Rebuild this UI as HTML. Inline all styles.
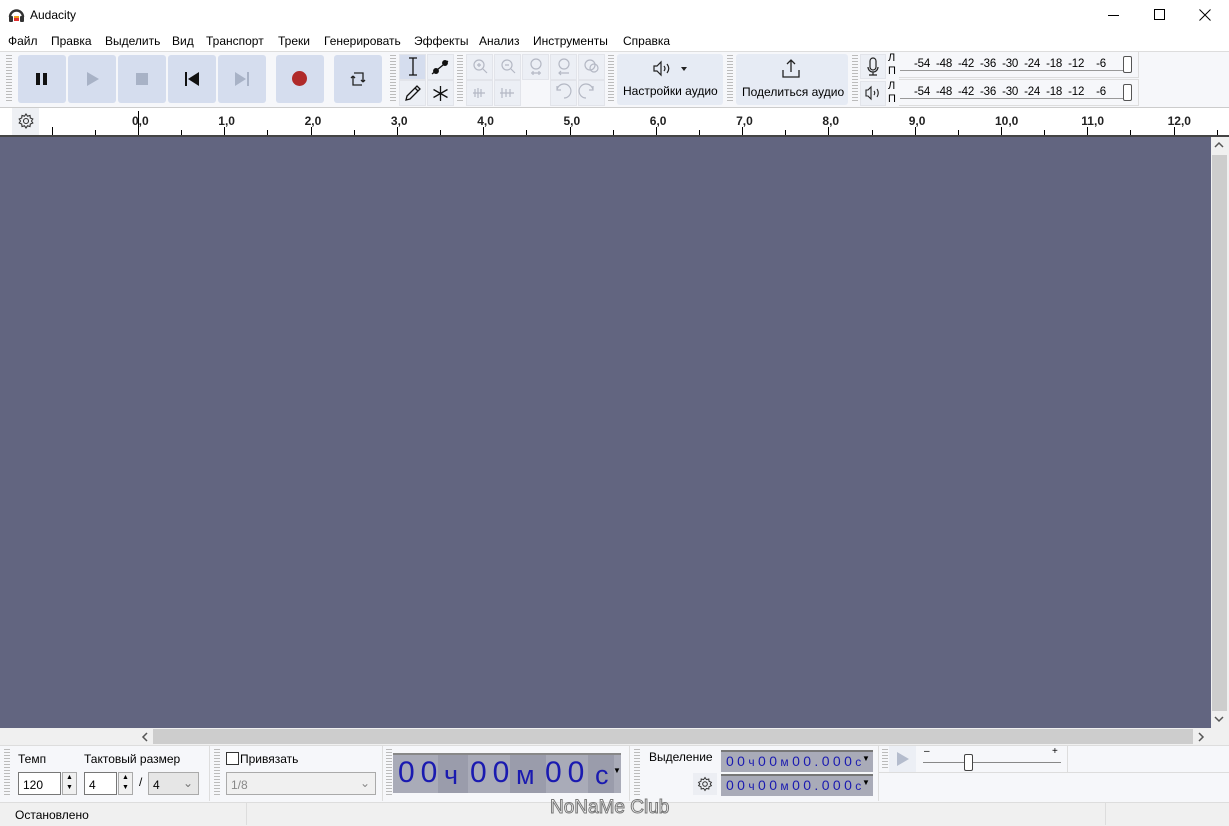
<!DOCTYPE html>
<html><head><meta charset="utf-8"><style>
*{box-sizing:border-box;margin:0;padding:0}
body{width:1229px;height:826px;position:relative;overflow:hidden;background:#f0f0f0;font-family:"Liberation Sans","DejaVu Sans",sans-serif;font-size:12px;color:#000}
.a{position:absolute}
.btn{position:absolute;background:#d5ddee;border-radius:3px}
.grip{position:absolute;width:6px;background:repeating-linear-gradient(to bottom,#bbb 0 1px,transparent 1px 3px);}
.tool{position:absolute;width:27px;height:26px;background:#eceff5;border:1px solid #e2e4ea}
.lcd{position:absolute;background:#a9abb8;font-family:"Liberation Sans",sans-serif;color:#1a1ab0}
.d{position:absolute;color:#1a1ab0;white-space:nowrap}
</style></head><body>
<div class="a" style="left:0;top:0;width:1229px;height:31px;background:#fff"></div>
<svg class="a" style="left:8px;top:7px" width="17" height="16"><path d="M2 10 A6.5 6.5 0 0 1 15 10" stroke="#333" stroke-width="2.4" fill="none"/><rect x="1" y="9" width="4" height="6" rx="1" fill="#333"/><rect x="12" y="9" width="4" height="6" rx="1" fill="#333"/><rect x="6" y="9" width="5" height="5" fill="#f0a020"/><rect x="6" y="11" width="5" height="3" fill="#e03030"/></svg>
<div class="a" style="left:30px;top:8px;font-size:12px">Audacity</div>
<div class="a" style="left:1108px;top:15px;width:11px;height:1px;background:#000"></div>
<div class="a" style="left:1154px;top:9px;width:11px;height:11px;border:1px solid #000"></div>
<svg class="a" style="left:1199px;top:9px" width="12" height="12"><path d="M0.5 0.5L11.5 11.5M11.5 0.5L0.5 11.5" stroke="#000"/></svg>
<div class="a" style="left:0;top:31px;width:1229px;height:20px;background:#fff"></div>
<div class="a" style="left:8px;top:34px;white-space:nowrap">
<span class="a" style="left:0">Файл</span><span class="a" style="left:43px">Правка</span><span class="a" style="left:97px">Выделить</span><span class="a" style="left:164px">Вид</span><span class="a" style="left:198px">Транспорт</span><span class="a" style="left:270px">Треки</span><span class="a" style="left:316px">Генерировать</span><span class="a" style="left:406px">Эффекты</span><span class="a" style="left:471px">Анализ</span><span class="a" style="left:525px">Инструменты</span><span class="a" style="left:615px">Справка</span></div>
<div class="a" style="left:0;top:51px;width:1229px;height:56px;background:#f6f7fa;border-top:1px solid #ddd"></div>
<div class="grip" style="left:6px;top:55px;height:48px"></div>
<div class="btn" style="left:18px;top:55px;width:48px;height:48px"></div>
<div class="btn" style="left:68px;top:55px;width:48px;height:48px"></div>
<div class="btn" style="left:118px;top:55px;width:48px;height:48px"></div>
<div class="btn" style="left:168px;top:55px;width:48px;height:48px"></div>
<div class="btn" style="left:218px;top:55px;width:48px;height:48px"></div>
<div class="btn" style="left:276px;top:55px;width:48px;height:48px"></div>
<div class="btn" style="left:334px;top:55px;width:48px;height:48px"></div>
<div class="a" style="left:36px;top:73px;width:4px;height:12px;background:#111"></div><div class="a" style="left:43px;top:73px;width:4px;height:12px;background:#111"></div>
<svg class="a" style="left:85px;top:71px" width="16" height="16"><path d="M2 1L14 8L2 15Z" fill="#a8b2c6"/></svg>
<div class="a" style="left:136px;top:73px;width:12px;height:12px;background:#a8b2c6"></div>
<svg class="a" style="left:184px;top:72px" width="16" height="14"><rect x="1" y="0" width="2" height="14" fill="#111"/><path d="M15 0L4 7L15 14Z" fill="#111"/></svg>
<svg class="a" style="left:234px;top:72px" width="16" height="14"><rect x="13" y="0" width="2" height="14" fill="#a8b2c6"/><path d="M1 0L12 7L1 14Z" fill="#a8b2c6"/></svg>
<div class="a" style="left:292px;top:71px;width:15px;height:15px;border-radius:50%;background:#b02a2a"></div>
<svg class="a" style="left:349px;top:70px" width="18" height="18" fill="none" stroke="#222" stroke-width="1.3"><path d="M5 3H14V12M14 12L12 10M14 12L16 10"/><path d="M13 15H4V6M4 6L2 8M4 6L6 8"/></svg>
<div class="grip" style="left:390px;top:55px;height:48px"></div>
<div class="tool" style="left:399px;top:54px;background:#d5ddee"></div>
<div class="tool" style="left:427px;top:54px"></div>
<div class="tool" style="left:399px;top:80px"></div>
<div class="tool" style="left:427px;top:80px"></div>
<svg class="a" style="left:405px;top:57px" width="16" height="20" stroke="#111" stroke-width="1.3" fill="none"><path d="M4 1H12M4 18H12M8 1V18"/></svg>
<svg class="a" style="left:430px;top:57px" width="20" height="20" stroke="#111" stroke-width="1.3" fill="#111"><path d="M2 17L18 4" fill="none"/><circle cx="6" cy="14" r="2.3"/><circle cx="15" cy="6" r="2.3"/></svg>
<svg class="a" style="left:404px;top:84px" width="18" height="18" stroke="#111" stroke-width="1.3" fill="none"><path d="M2 16L3 12L13 2L16 5L6 15Z M11 4L14 7"/></svg>
<svg class="a" style="left:432px;top:85px" width="17" height="17" stroke="#111" stroke-width="1.3"><path d="M8.5 1V16M1.5 4.5L15.5 12.5M15.5 4.5L1.5 12.5"/></svg>
<div class="grip" style="left:457px;top:55px;height:48px"></div>
<div class="tool" style="left:466px;top:54px"></div><div class="tool" style="left:494px;top:54px"></div><div class="tool" style="left:522px;top:54px"></div><div class="tool" style="left:550px;top:54px"></div><div class="tool" style="left:578px;top:54px"></div>
<div class="tool" style="left:466px;top:80px"></div><div class="tool" style="left:494px;top:80px"></div><div class="tool" style="left:550px;top:80px"></div><div class="tool" style="left:578px;top:80px"></div>
<svg class="a" style="left:466px;top:54px" width="140" height="52" stroke="#b4b8c4" stroke-width="1.2" fill="none">
<circle cx="13" cy="11" r="5"/><path d="M17 15L21 19M11 11H15M13 9V13"/>
<circle cx="41" cy="11" r="5"/><path d="M45 15L49 19M39 11H43"/>
<circle cx="70" cy="10" r="5"/><path d="M65 19H75M67 17V21M73 17V21"/>
<circle cx="98" cy="10" r="5"/><path d="M93 19H103M95 17L93 19L95 21"/>
<circle cx="124" cy="11" r="5"/><circle cx="128" cy="14" r="4"/>
<path d="M7 39H19M9 35V43M12 34V44M15 35V43"/><path d="M34 39H48M36 34V44M40 35V43M44 35V43"/>
<path d="M98 44A7 7 0 1 0 91 36M91 32V36H95"/><path d="M120 44A7 7 0 1 1 127 36M127 32V36H123"/>
</svg>
<div class="grip" style="left:608px;top:55px;height:48px"></div>
<div class="btn" style="left:617px;top:54px;width:106px;height:51px;background:#e6ebf4"></div>
<svg class="a" style="left:652px;top:60px" width="36" height="18" stroke="#222" stroke-width="1.2" fill="none"><path d="M2 6H5L9 2V15L5 11H2Z"/><path d="M12 6Q14 8.5 12 11M15 4Q18.5 8.5 15 13"/><path d="M29 7H35L32 11Z" fill="#222" stroke="none"/></svg>
<div class="a" style="left:623px;top:84px">Настройки аудио</div>
<div class="grip" style="left:727px;top:55px;height:48px"></div>
<div class="btn" style="left:736px;top:54px;width:112px;height:51px;background:#e6ebf4"></div>
<svg class="a" style="left:780px;top:58px" width="22" height="22" stroke="#222" stroke-width="1.3" fill="none"><path d="M11 2V14M7 6L11 2L15 6M3 12V19H19V12"/></svg>
<div class="a" style="left:742px;top:85px">Поделиться аудио</div>
<div class="grip" style="left:852px;top:55px;height:48px"></div>
<div class="tool" style="left:860px;top:54px;width:26px;height:25px"></div>
<div class="tool" style="left:860px;top:81px;width:26px;height:25px"></div>
<svg class="a" style="left:866px;top:57px" width="14" height="20" stroke="#222" stroke-width="1.2" fill="none"><rect x="4" y="1" width="6" height="12" rx="3"/><path d="M2 10A5 5 0 0 0 12 10M7 15V18M3 18H11"/></svg>
<svg class="a" style="left:864px;top:85px" width="20" height="16" stroke="#222" stroke-width="1.1" fill="none"><path d="M2 5H4L7 2V14L4 11H2Z"/><path d="M10 6Q11.5 8 10 10M13 4Q15.5 8 13 12"/></svg>
<div class="a" style="left:888px;top:52px;font-size:11px;line-height:13px">Л<br>П</div>
<div class="a" style="left:888px;top:80px;font-size:11px;line-height:13px">Л<br>П</div>
<div class="a" style="left:899px;top:51px;width:240px;height:27px;border:1px solid #ddd;border-left:none"></div>
<div class="a" style="left:899px;top:79px;width:240px;height:27px;border:1px solid #ddd;border-left:none"></div>
<div class="a" style="left:900px;top:70px;width:224px;height:1px;background:#999"></div>
<div class="a" style="left:900px;top:98px;width:224px;height:1px;background:#999"></div>
<div class="a" style="left:914px;top:58px;font-size:11.5px;word-spacing:3px;background:#f6f7fa;letter-spacing:-0.2px">-54 -48 -42 -36 -30 -24 -18 -12 &nbsp;-6</div>
<div class="a" style="left:914px;top:86px;font-size:11.5px;word-spacing:3px;background:#f6f7fa;letter-spacing:-0.2px">-54 -48 -42 -36 -30 -24 -18 -12 &nbsp;-6</div>
<div class="a" style="left:1123px;top:56px;width:9px;height:17px;border:1px solid #555;border-radius:2px;background:#fff"></div>
<div class="a" style="left:1123px;top:84px;width:9px;height:17px;border:1px solid #555;border-radius:2px;background:#fff"></div>
<div class="a" style="left:0;top:107px;width:1229px;height:30px;background:#fff;border-top:1px solid #ccc;border-bottom:2px solid #444"></div>
<div class="a" style="left:12px;top:108px;width:27px;height:27px;background:#eef0f4"></div>
<svg class="a" style="left:17px;top:112px" width="18" height="18" stroke="#333" stroke-width="1.1" fill="none"><circle cx="9" cy="9" r="2.5"/><path d="M9 2L10.5 4.2L13 3.5L13.3 6L15.8 7L14.5 9L15.8 11L13.3 12L13 14.5L10.5 13.8L9 16L7.5 13.8L5 14.5L4.7 12L2.2 11L3.5 9L2.2 7L4.7 6L5 3.5L7.5 4.2Z"/></svg>
<div class="a" style="left:138px;top:111px;width:1px;height:24px;background:#000"></div>
<div id="ruler"></div>
<div class="a" style="left:0;top:137px;width:1211px;height:591px;background:#626580"></div>
<div class="a" style="left:1211px;top:137px;width:18px;height:591px;background:#f0f0f0"></div>
<div class="a" style="left:1212px;top:155px;width:15px;height:556px;background:#cdcdcd"></div>
<svg class="a" style="left:1214px;top:141px" width="10" height="8" stroke="#555" stroke-width="1.5" fill="none"><path d="M1 6L5 2L9 6"/></svg>
<svg class="a" style="left:1214px;top:715px" width="10" height="8" stroke="#555" stroke-width="1.5" fill="none"><path d="M1 2L5 6L9 2"/></svg>
<div class="a" style="left:0;top:728px;width:1211px;height:17px;background:#f0f0f0"></div>
<div class="a" style="left:153px;top:729px;width:1040px;height:15px;background:#cdcdcd"></div>
<svg class="a" style="left:141px;top:732px" width="8" height="10" stroke="#555" stroke-width="1.5" fill="none"><path d="M6 1L2 5L6 9"/></svg>
<svg class="a" style="left:1197px;top:732px" width="8" height="10" stroke="#555" stroke-width="1.5" fill="none"><path d="M2 1L6 5L2 9"/></svg>
<div class="a" style="left:0;top:745px;width:1229px;height:57px;background:#f6f7fa;border-top:1px solid #ddd"></div>
<div class="grip" style="left:4px;top:749px;height:48px"></div>
<div class="a" style="left:18px;top:752px">Темп</div>
<div class="a" style="left:84px;top:752px">Тактовый размер</div>
<div class="a" style="left:18px;top:772px;width:43px;height:23px;border:1px solid #777;background:#fff;padding:5px 4px">120</div>
<div class="a" style="left:62px;top:772px;width:15px;height:23px;border:1px solid #aaa;background:#f0f0f0;font-size:7px;line-height:10px;text-align:center">▲<br>▼</div>
<div class="a" style="left:84px;top:772px;width:33px;height:23px;border:1px solid #777;background:#fff;padding:5px 4px">4</div>
<div class="a" style="left:118px;top:772px;width:15px;height:23px;border:1px solid #aaa;background:#f0f0f0;font-size:7px;line-height:10px;text-align:center">▲<br>▼</div>
<div class="a" style="left:139px;top:775px">/</div>
<div class="a" style="left:148px;top:772px;width:51px;height:23px;border:1px solid #aaa;background:#e6e6e6;padding:5px 4px">4<span style="position:absolute;right:5px;top:3px;color:#777">⌄</span></div>
<div class="a" style="left:209px;top:746px;width:1px;height:55px;background:#ddd"></div>
<div class="grip" style="left:214px;top:749px;height:48px"></div>
<div class="a" style="left:226px;top:752px;width:13px;height:13px;border:1px solid #333;background:#fff"></div>
<div class="a" style="left:240px;top:752px">Привязать</div>
<div class="a" style="left:226px;top:772px;width:150px;height:23px;border:1px solid #aaa;background:#f0f0f0;padding:5px 4px;color:#888">1/8<span style="position:absolute;right:5px;top:3px">⌄</span></div>
<div class="a" style="left:382px;top:746px;width:1px;height:55px;background:#ddd"></div>
<div class="grip" style="left:386px;top:749px;height:48px"></div>
<div class="lcd" style="left:393px;top:753px;width:228px;height:40px;border-top:2px solid #888"></div>
<div class="a" style="left:438px;top:755px;width:30px;height:38px;background:#9a9cab"></div>
<div class="a" style="left:510px;top:755px;width:36px;height:38px;background:#9a9cab"></div>
<div class="a" style="left:588px;top:755px;width:26px;height:38px;background:#9a9cab"></div>
<div class="d" style="left:398px;top:756px;font-size:30px;letter-spacing:6px">00</div>
<div class="d" style="left:444px;top:760px;font-size:27px">ч</div>
<div class="d" style="left:470px;top:756px;font-size:30px;letter-spacing:6px">00</div>
<div class="d" style="left:516px;top:760px;font-size:27px">м</div>
<div class="d" style="left:545px;top:756px;font-size:30px;letter-spacing:6px">00</div>
<div class="d" style="left:595px;top:760px;font-size:27px">с</div>
<div class="a" style="left:613px;top:766px;font-size:8px">▼</div>
<div class="a" style="left:629px;top:746px;width:1px;height:55px;background:#ddd"></div>
<div class="grip" style="left:634px;top:749px;height:48px"></div>
<div class="a" style="left:649px;top:750px">Выделение</div>
<div class="lcd" style="left:721px;top:750px;width:152px;height:22px;border-top:2px solid #777;font-size:14px;padding:1px 0 0 5px;letter-spacing:3.4px;white-space:nowrap">00<span style="font-size:12px">ч</span>00<span style="font-size:12px">м</span>00.000<span style="font-size:12px">с</span></div>
<div class="lcd" style="left:721px;top:774px;width:152px;height:22px;border-top:2px solid #777;font-size:14px;padding:1px 0 0 5px;letter-spacing:3.4px;white-space:nowrap">00<span style="font-size:12px">ч</span>00<span style="font-size:12px">м</span>00.000<span style="font-size:12px">с</span></div>
<div class="a" style="left:862px;top:754px;font-size:8px">▼</div>
<div class="a" style="left:862px;top:778px;font-size:8px">▼</div>
<div class="a" style="left:693px;top:773px;width:24px;height:22px;background:#eceef3"></div>
<svg class="a" style="left:697px;top:776px" width="16" height="16" stroke="#333" stroke-width="1" fill="none"><circle cx="8" cy="8" r="2.3"/><path d="M8 1.5L9.4 3.6L11.8 3L12 5.3L14.4 6.3L13.2 8L14.4 9.7L12 10.7L11.8 13L9.4 12.4L8 14.5L6.6 12.4L4.2 13L4 10.7L1.6 9.7L2.8 8L1.6 6.3L4 5.3L4.2 3L6.6 3.6Z"/></svg>
<div class="a" style="left:878px;top:746px;width:1px;height:55px;background:#ddd"></div>
<div class="a" style="left:878px;top:772px;width:351px;height:1px;background:#ddd"></div>
<div class="grip" style="left:882px;top:749px;height:20px"></div>
<div class="a" style="left:889px;top:746px;width:27px;height:26px;background:#eceff5"></div>
<svg class="a" style="left:895px;top:751px" width="16" height="16"><path d="M2 1L14 8L2 15Z" fill="#b4bccd"/></svg>
<div class="a" style="left:924px;top:746px;font-size:10px">–</div>
<div class="a" style="left:1052px;top:746px;font-size:10px">+</div>
<div class="a" style="left:923px;top:762px;width:138px;height:1px;background:#888"></div>
<div class="a" style="left:964px;top:754px;width:9px;height:17px;border:1px solid #444;border-radius:2px;background:#fff"></div>
<div class="a" style="left:1067px;top:746px;width:1px;height:26px;background:#ddd"></div>
<div class="a" style="left:0;top:802px;width:1229px;height:24px;background:#f0f0f0;border-top:1px solid #ddd"></div>
<div class="a" style="left:15px;top:808px">Остановлено</div>
<div class="a" style="left:246px;top:803px;width:1px;height:22px;background:#ddd"></div>
<div class="a" style="left:1105px;top:803px;width:1px;height:22px;background:#ddd"></div>
<div class="a" style="left:550px;top:797px;font-size:19px;color:#fff;-webkit-text-stroke:1px #777">NoNaMe Club</div>
<script>
var r=document.getElementById('ruler'),h='';
var labels=['0,0','1,0','2,0','3,0','4,0','5,0','6,0','7,0','8,0','9,0','10,0','11,0','12,0'];
for(var i=-2;i<=26;i++){var x=138+i*43.15;if(x<50||x>1225)continue;
 if(i%2==0){h+='<div class="a" style="left:'+x.toFixed(1)+'px;top:127px;width:1px;height:8px;background:#000"></div>';
  var l=labels[i/2];if(l)h+='<div class="a" style="left:'+(x-6).toFixed(1)+'px;top:114px;font-size:12px;font-weight:bold;color:#222">'+l+'</div>';}
 else h+='<div class="a" style="left:'+x.toFixed(1)+'px;top:130px;width:1px;height:5px;background:#000"></div>';}
r.innerHTML=h;
</script>
</body></html>
